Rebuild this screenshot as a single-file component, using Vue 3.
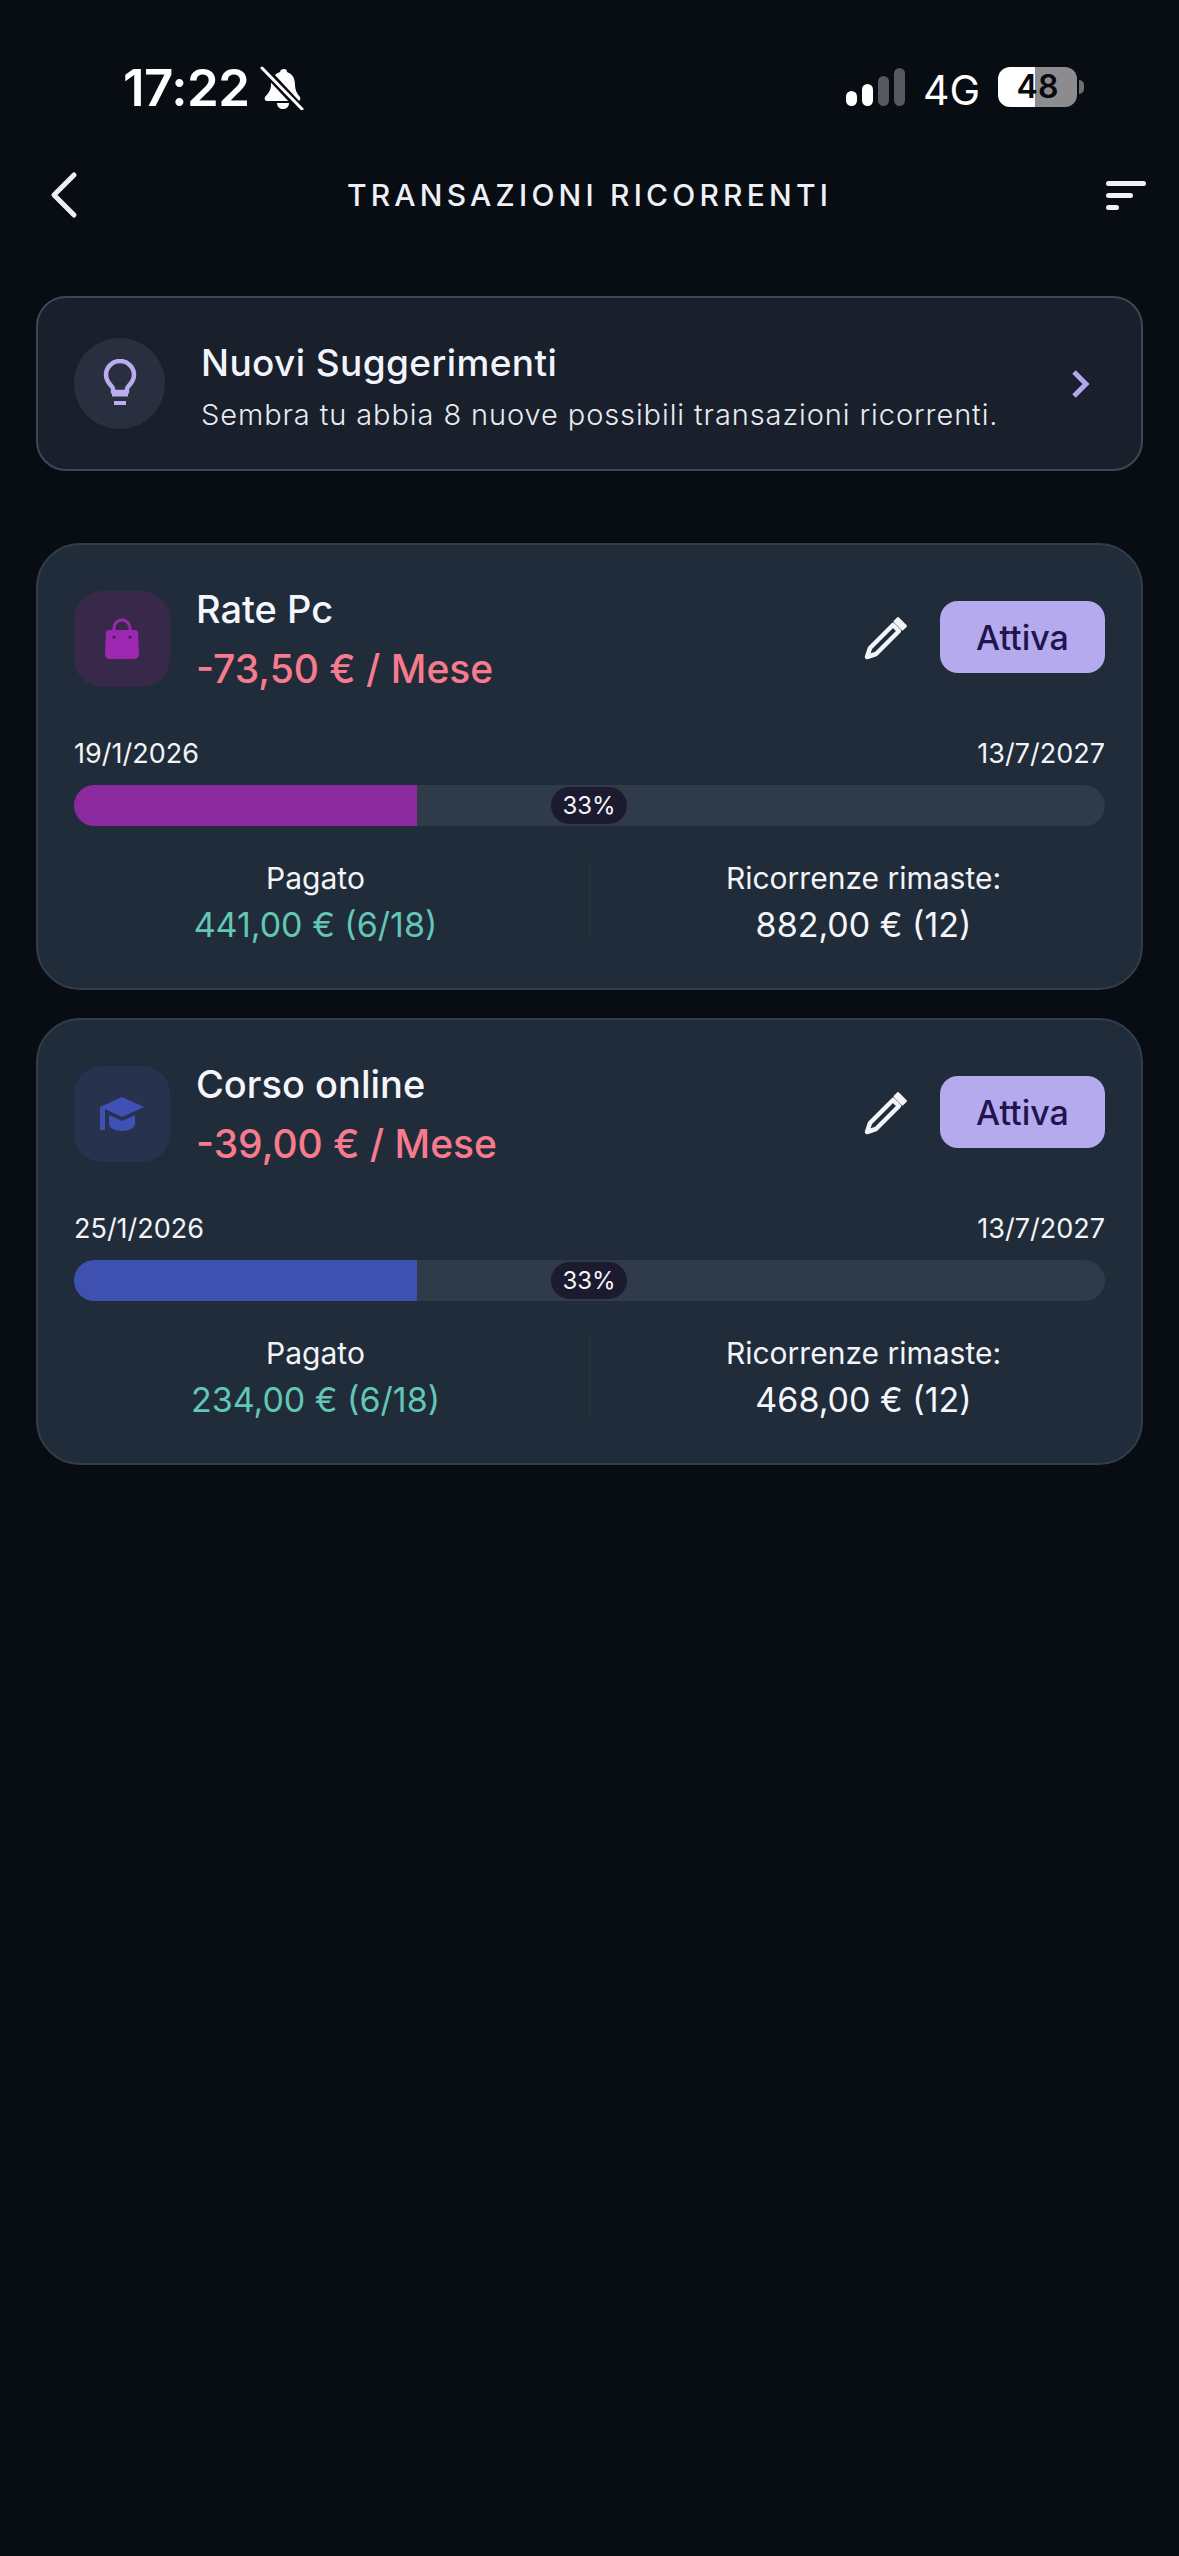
<script setup>
const cards = [
  { name: 'Rate Pc', amount: '-73,50 € / Mese', start: '19/1/2026', end: '13/7/2027', paid: '441,00 € (6/18)', left: '882,00 € (12)', color: '#8a2a9e', icon: '#9c27b0', tile: '#38294a', kind: 'bag' },
  { name: 'Corso online', amount: '-39,00 € / Mese', start: '25/1/2026', end: '13/7/2027', paid: '234,00 € (6/18)', left: '468,00 € (12)', color: '#3f51b0', icon: '#3f51b5', tile: '#27324f', kind: 'cap' },
]
</script>

<template>
  <div class="page">
    <div class="status">
      <div class="status-left">
        <span class="time">17:22</span>
        <svg class="bell" viewBox="0 0 44 44" width="44" height="44">
          <path fill="#fff" d="M24 3c2 0 3 1 3 3 6 2 8 7 8 13 0 5 2 9 5 12 1 2 0 4-2 4H7c-2 0-3-2-2-4 3-3 6-7 6-12 0-6 3-11 9-13 0-2 2-3 4-3zM17 37h12c0 4-3 6-6 6s-6-2-6-6z"/>
          <path stroke="#080c13" stroke-width="8" d="M2 1 42 44"/>
          <path stroke="#fff" stroke-width="3" stroke-linecap="round" d="M2 2 42 43"/>
        </svg>
      </div>
      <div class="status-right">
        <div class="signal">
          <i class="b1"></i><i class="b2"></i><i class="b3"></i><i class="b4"></i>
        </div>
        <span class="net">4G</span>
        <div class="battery">
          <div class="batt-body"><span>48</span></div>
          <div class="batt-tip"></div>
        </div>
      </div>
    </div>

    <header class="nav">
      <svg width="30" height="48" viewBox="0 0 30 48"><path d="M26 4 6 24l20 20" fill="none" stroke="#eef0f6" stroke-width="5" stroke-linecap="round" stroke-linejoin="round"/></svg>
      <h1>TRANSAZIONI RICORRENTI</h1>
      <div class="filter"><i class="l1"></i><i class="l2"></i><i class="l3"></i></div>
    </header>

    <section class="suggest">
      <div class="bulb">
        <svg width="34" height="50" viewBox="0 0 34 50" fill="none" stroke="#b9adf0" stroke-width="4.5">
          <path d="M10 33v-3c0-3-7-6-7-14a14 14 0 0 1 28 0c0 8-7 11-7 14v3z" stroke-linejoin="round"/>
          <path d="M9 35h16" stroke-width="5"/>
          <path d="M11 44h12" stroke-width="4"/>
        </svg>
      </div>
      <div class="suggest-text">
        <div class="suggest-title">Nuovi Suggerimenti</div>
        <div class="suggest-sub">Sembra tu abbia 8 nuove possibili transazioni ricorrenti.</div>
      </div>
      <svg class="chev" width="20" height="30" viewBox="0 0 20 30"><path d="M3 3l12 12L3 27" fill="none" stroke="#b1a6ea" stroke-width="5"/></svg>
    </section>

    <section v-for="c in cards" :key="c.name" class="card">
      <div class="top">
        <div class="tile" :style="{ background: c.tile }">
          <svg v-if="c.kind === 'bag'" width="38" height="42" viewBox="0 0 38 42">
            <path :fill="c.icon" d="M6 12h26c2 0 3 1 3 3l1 21c0 3-2 5-5 5H7c-3 0-5-2-5-5l1-21c0-2 1-3 3-3z"/>
            <path fill="none" :stroke="c.icon" stroke-width="3" d="M11 14V10a8 8 0 0 1 16 0v4"/>
            <circle cx="11" cy="19" r="1.6" fill="#4a1a58"/>
            <circle cx="27" cy="19" r="1.6" fill="#4a1a58"/>
          </svg>
          <svg v-else width="46" height="36" viewBox="0 0 46 36">
            <path :fill="c.icon" d="M23 1 45 11 23 21 6 13v21H1V11z"/>
            <path :fill="c.icon" d="M10 19l13 6 13-6v9c0 4-6 7-13 7s-13-3-13-7z"/>
          </svg>
        </div>
        <div class="head">
          <div class="name">{{ c.name }}</div>
          <div class="amount">{{ c.amount }}</div>
        </div>
        <svg class="pen" width="44" height="44" viewBox="0 0 44 44" fill="none">
          <path d="M29 9 6 32l-3 9 9-3 23-23z" stroke="#f2f4f8" stroke-width="4.5" stroke-linejoin="round"/>
          <path d="M34 2l8 8-3.5 3.5-8-8z" fill="#f2f4f8" stroke="#f2f4f8" stroke-width="2" stroke-linejoin="round"/>
        </svg>
        <button class="active">Attiva</button>
      </div>

      <div class="dates"><span>{{ c.start }}</span><span>{{ c.end }}</span></div>
      <div class="track">
        <div class="fill" :style="{ background: c.color }"></div>
        <span class="pct">33%</span>
      </div>

      <div class="stats">
        <div class="stat">
          <div class="label">Pagato</div>
          <div class="value paid">{{ c.paid }}</div>
        </div>
        <div class="divider"></div>
        <div class="stat">
          <div class="label">Ricorrenze rimaste:</div>
          <div class="value">{{ c.left }}</div>
        </div>
      </div>
    </section>
  </div>
</template>

<style>
html, body { margin: 0; background: #080c13; }
</style>

<style scoped>
.page {
  position: relative;
  box-sizing: border-box;
  width: 1179px;
  height: 2556px;
  background: #080c13;
  padding: 0 36px;
  font-family: "Inter", "Noto Sans", sans-serif;
  color: #f4f6fb;
  overflow: hidden;
}

.status {
  height: 130px;
  display: flex;
  justify-content: space-between;
  padding: 60px 59px 0 87px;
  box-sizing: border-box;
}
.status-left { display: flex; align-items: flex-start; gap: 10px; }
.time { font-size: 51px; font-weight: 600; line-height: 56px; letter-spacing: -0.5px; color: #fff; }
.bell { margin-top: 6px; }
.status-right { display: flex; align-items: flex-start; margin-top: 8px; }
.signal { display: flex; align-items: flex-end; gap: 5px; height: 38px; }
.signal i { width: 11px; border-radius: 6px; display: block; }
.b1 { height: 15px; background: #fff; }
.b2 { height: 22px; background: #fff; }
.b3 { height: 30px; background: #55585d; }
.b4 { height: 38px; background: #55585d; }
.net { font-size: 41px; font-weight: 400; line-height: 44px; margin-left: 18px; color: #fff; }
.battery { display: flex; align-items: center; margin-left: 18px; margin-top: -1px; }
.batt-body {
  width: 79px; height: 40px; border-radius: 12px;
  background: linear-gradient(90deg, #fff 0 47%, #8c8c8e 47% 100%);
  color: #08090d; font-size: 32px; font-weight: 600; line-height: 40px; text-align: center;
}
.batt-tip { width: 5px; height: 14px; border-radius: 0 5px 5px 0; background: #6e6e70; margin-left: 2px; }

.nav {
  height: 76px;
  margin-top: 27px;
  display: flex; align-items: center; justify-content: space-between;
  padding-left: 12px;
  position: relative;
}
.nav h1 {
  position: absolute; left: 0; right: 0; text-align: center; margin: 0;
  font-size: 30px; font-weight: 500; letter-spacing: 4.2px; color: #eef0f6; line-height: 36px;
}
.filter { display: flex; flex-direction: column; gap: 7px; width: 40px; margin-right: -3px; }
.filter i { display: block; height: 5px; border-radius: 3px; background: #f0f2f8; }
.l1 { width: 40px; }
.l2 { width: 27px; }
.l3 { width: 13px; }

.suggest {
  margin-top: 63px;
  height: 175px;
  box-sizing: border-box;
  border: 2px solid #414654;
  border-radius: 30px;
  background: #191f2b;
  display: flex; align-items: center;
  padding: 0 50px 0 36px;
}
.bulb {
  width: 91px; height: 91px; border-radius: 50%; background: #2a2f40;
  display: flex; align-items: center; justify-content: center; flex: none;
}
.suggest-text { flex: 1; margin-left: 36px; padding-top: 6px; }
.suggest-title { font-size: 37px; font-weight: 500; line-height: 44px; color: #f2f4fb; letter-spacing: 0.4px; }
.suggest-sub { font-size: 29px; font-weight: 300; line-height: 36px; margin-top: 12px; letter-spacing: 0.9px; color: #e8ebf2; white-space: nowrap; }

.card {
  margin-top: 28px;
  height: 447px;
  box-sizing: border-box;
  border: 2px solid #333d4a;
  border-radius: 44px;
  background: #202c39;
  padding: 44px 36px 0;
}
.suggest + .card { margin-top: 72px; }
.top { display: flex; align-items: flex-start; height: 100px; }
.tile {
  width: 96px; height: 96px; border-radius: 28px; flex: none; margin-top: 2px;
  display: flex; align-items: center; justify-content: center;
}
.head { flex: 1; margin-left: 26px; margin-top: -2px; }
.name { font-size: 38px; font-weight: 500; line-height: 44px; color: #f4f6fb; white-space: nowrap; }
.amount { font-size: 39px; font-weight: 500; line-height: 46px; margin-top: 15px; color: #f77b8d; white-space: nowrap; }
.pen { margin: 27px 32px 0 0; }
.active {
  width: 165px; height: 72px; margin-top: 12px; border: 0; border-radius: 18px;
  background: #b6aaee; color: #21154f; font: 500 34px "Inter", sans-serif;
}
.dates {
  display: flex; justify-content: space-between; margin-top: 49px;
  font-size: 27px; line-height: 32px; color: #f2f4f8;
}
.track {
  margin-top: 15px; height: 41px; border-radius: 21px; background: #2f3b49;
  position: relative; overflow: hidden;
}
.fill { width: 343px; height: 100%; }
.pct {
  position: absolute; left: 477px; top: 2px; width: 76px; height: 37px; border-radius: 19px;
  background: #1c1a2e; font-size: 24px; line-height: 37px; text-align: center; color: #f4f6fb;
}
.stats { display: flex; margin-top: 34px; }
.stat { flex: 1; text-align: center; white-space: nowrap; }
.divider { width: 1px; height: 80px; background: #29343f; margin: 0 32px; }
.label { font-size: 30px; line-height: 36px; color: #f2f4f8; }
.value { font-size: 34px; line-height: 44px; margin-top: 7px; color: #f4f6fb; }
.paid { color: #62c7b7; }
</style>
